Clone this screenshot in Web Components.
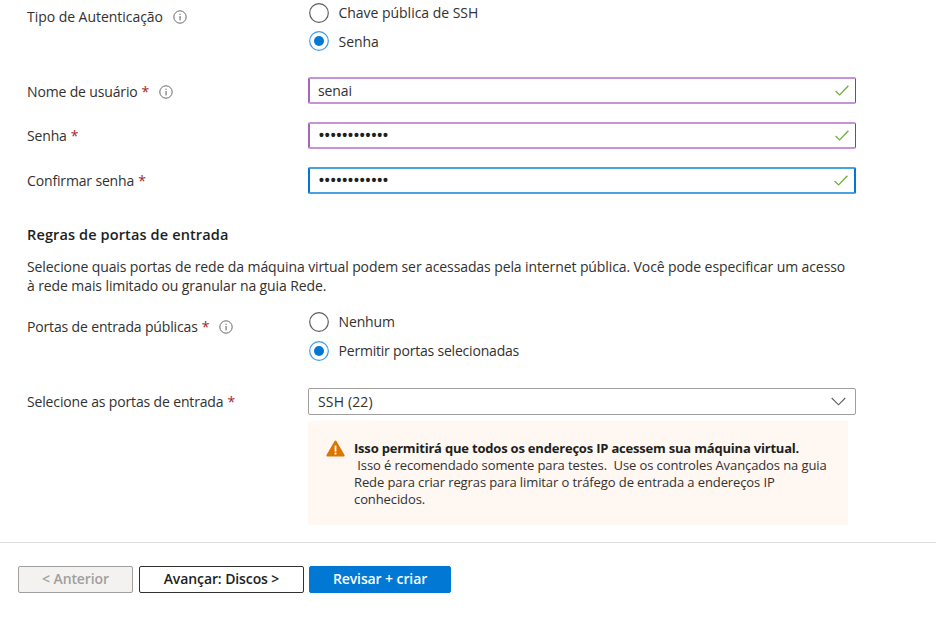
<!DOCTYPE html>
<html lang="pt-BR"><head><meta charset="utf-8"><title>Criar máquina virtual</title>
<style>
html,body{margin:0;padding:0;background:#fff}
body{width:936px;height:619px;overflow:hidden;font:14px/19px "Open Sans","Noto Sans",sans-serif;color:#323130}
</style></head><body>
<az-page>
  <az-row label="Tipo de Autenticação" info style="--top:3px;--label-top:4px;--ls:-.04px">
    <az-radio-group>
      <az-radio style="--ls:-.03px;--shift:1px">Chave pública de SSH</az-radio>
      <az-radio checked>Senha</az-radio>
    </az-radio-group>
  </az-row>
  <az-row label="Nome de usuário" required info style="--top:26px;--label-top:5px">
    <az-input valid state="visited">senai</az-input>
  </az-row>
  <az-row label="Senha" required style="--top:18px;--label-top:4px">
    <az-input valid state="visited" secret>••••••••••••</az-input>
  </az-row>
  <az-row label="Confirmar senha" required style="--top:18px;--label-top:4px">
    <az-input valid state="focus" secret>••••••••••••</az-input>
  </az-row>
  <az-section heading="Regras de portas de entrada">Selecione quais portas de rede da máquina virtual podem ser acessadas pela internet pública. Você pode especificar um acesso<br>à rede mais limitado ou granular na guia Rede.</az-section>
  <az-row label="Portas de entrada públicas" required info style="--top:17px;--label-top:5px">
    <az-radio-group style="--gap:9px">
      <az-radio>Nenhum</az-radio>
      <az-radio checked style="--ls:-.2px">Permitir portas selecionadas</az-radio>
    </az-radio-group>
  </az-row>
  <az-row label="Selecione as portas de entrada" required style="--top:27px;--label-top:4px">
    <az-select>SSH (22)</az-select>
  </az-row>
  <az-row style="--top:6px">
    <az-notice heading="Isso permitirá que todos os endereços IP acessem sua máquina virtual.">&nbsp;Isso é recomendado somente para testes.&nbsp; Use os controles Avançados na guia Rede para criar regras para limitar o tráfego de entrada a endereços IP conhecidos.</az-notice>
  </az-row>
  <az-footer>
    <az-button variant="disabled" style="--w:115px">&lt; Anterior</az-button>
    <az-button variant="outline" style="--w:165px">Avançar: Discos &gt;</az-button>
    <az-button variant="primary" style="--w:142px">Revisar + criar</az-button>
  </az-footer>
</az-page>
<script>
const FONT='"Open Sans","Noto Sans",sans-serif';
function def(name,css,html,init){
  customElements.define(name,class extends HTMLElement{
    connectedCallback(){
      if(this.shadowRoot)return;
      const r=this.attachShadow({mode:'open'});
      r.innerHTML='<style>'+css+'</style>'+(typeof html==='function'?html(this):html);
    }
  });
}
def('az-page',':host{display:block}','<slot></slot>');
def('az-info',':host{display:inline-flex;width:14px;height:14px}svg{display:block}',
 '<svg width="14" height="14" viewBox="0 0 14 14" fill="none"><circle cx="7" cy="7" r="6.2" stroke="#6b6a69" stroke-width="1"/><rect x="6.5" y="6" width="1.1" height="4.4" fill="#6b6a69"/><rect x="6.5" y="3.7" width="1.1" height="1.2" fill="#6b6a69"/></svg>');
def('az-row',
 `:host{display:grid;grid-template-columns:281px 548px;padding-left:27px;margin-top:var(--top,0)}
  .l{display:flex;align-items:flex-start;padding-top:var(--label-top,0);line-height:19px;white-space:nowrap;letter-spacing:var(--ls,-.15px)}
  .r{color:#a4262c;margin-left:4px}
  az-info{margin-left:10px;margin-top:3px}`,
 e=>{const t=e.getAttribute('label')||'';
  return `<div class="l">${t}${e.hasAttribute('required')?'<span class="r">*</span>':''}${e.hasAttribute('info')?'<az-info></az-info>':''}</div><div><slot></slot></div>`});
def('az-radio-group',':host{display:flex;flex-direction:column;gap:var(--gap,8px);padding-left:1px}','<slot></slot>');
def('az-radio',
 `:host{display:flex;align-items:center;height:20px;gap:9.5px;letter-spacing:var(--ls,-.13px);white-space:nowrap}
  svg{flex:none;display:block}
  span{padding-bottom:var(--shift,0)}`,
 e=>`<svg width="20" height="20" viewBox="0 0 20 20">${e.hasAttribute('checked')
   ?'<circle cx="10" cy="10" r="9.3" fill="#fff" stroke="#3f9be6" stroke-width="1.2"/><circle cx="10" cy="10" r="5" fill="#0078d4"/>'
   :'<circle cx="10" cy="10" r="9.3" fill="#fff" stroke="#605e5c" stroke-width="1.2"/>'}</svg><span><slot></slot></span>`);
def('az-input',
 `:host{display:flex;align-items:center;box-sizing:border-box;width:548px;height:27px;padding:0 6px 0 8px;border-radius:2px;background:#fff;letter-spacing:-.1px;color:#323130}
  :host([state=visited]){border:solid #c593d6;border-width:2px 1px;border-left:2px solid #a566c1;border-right:1px solid #7f3f98}
  :host([state=focus]){border:solid #4ba0e2;border-width:2px 2px 2px 2px;border-right-color:#0078d4;border-left-color:#0078d4}
  .v{flex:1;line-height:19px}
  :host([secret]) .v{letter-spacing:.92px;padding-left:1px;font:14px/19px "Liberation Sans",sans-serif;color:#201f1e;font-weight:700}
  svg{flex:none;display:block}`,
 `<span class="v"><slot></slot></span><svg width="14" height="11" viewBox="0 0 14 11" fill="none"><path d="M.6 6 L4.6 9.9 L13.4 .7" stroke="#6fae3a" stroke-width="1.3"/></svg>`);
def('az-select',
 `:host{display:flex;align-items:center;box-sizing:border-box;width:548px;height:27px;padding:0 9px 0 9px;border:1px solid #a19f9d;border-radius:2px;letter-spacing:.15px}
  .v{flex:1}svg{display:block;flex:none}`,
 `<span class="v"><slot></slot></span><svg width="15" height="9" viewBox="0 0 15 9" fill="none"><path d="M.7 1 L7.5 7.8 L14.3 1" stroke="#605e5c" stroke-width="1.1"/></svg>`);
def('az-notice',
 `:host{display:flex;box-sizing:border-box;width:540px;height:104px;padding:19px 16px 0 18px;gap:9px;background:#fff7f1;border-radius:2px;font-size:13px;line-height:17px;color:#323130;letter-spacing:-.1px}
  svg{flex:none;display:block}
  b{display:block;font-weight:700;color:#201f1e;letter-spacing:-.2px;white-space:nowrap}`,
 e=>`<svg width="19" height="17" viewBox="0 0 19 17"><path d="M9.5 .6 C9.9 .6 10.2 .8 10.4 1.1 L18.5 15 C18.9 15.7 18.4 16.5 17.6 16.5 H1.4 C.6 16.5 .1 15.7 .5 15 L8.6 1.1 C8.8 .8 9.1 .6 9.5 .6Z" fill="#db7500"/><rect x="8.6" y="5.6" width="1.8" height="6" fill="#fff"/><circle cx="9.5" cy="13.6" r="1.1" fill="#fff"/></svg><div><b>${e.getAttribute('heading')}</b><slot></slot></div>`);
def('az-section',
 `:host{display:block;padding:0 27px;margin-top:31px}
  h2{margin:0;font:600 14.5px/20px ${FONT};color:#201f1e;letter-spacing:.13px}
  p{margin:11.5px 0 0;line-height:19px;letter-spacing:-.1px;white-space:nowrap}`,
 e=>`<h2>${e.getAttribute('heading')}</h2><p><slot></slot></p>`);
def('az-footer',
 `:host{display:flex;gap:5px;margin-top:17px;padding:23px 0 0 18px;border-top:1px solid #e1dfdd}
  ::slotted(az-button:first-child){margin-right:1px}`,
 '<slot></slot>');
def('az-button',
 `:host{display:flex;align-items:center;justify-content:center;box-sizing:border-box;width:var(--w);height:27px;padding-bottom:2px;border-radius:2px;font-weight:600;letter-spacing:-.1px;white-space:nowrap;border:1px solid transparent}
  :host([variant=disabled]){background:#f3f2f1;border-color:#a19f9d;color:#a19f9d}
  :host([variant=outline]){background:#fff;border-color:#323130;color:#201f1e}
  :host([variant=primary]){background:#0078d4;border-color:#0078d4;color:#fff}`,
 '<slot></slot>');
</script>
</body></html>
